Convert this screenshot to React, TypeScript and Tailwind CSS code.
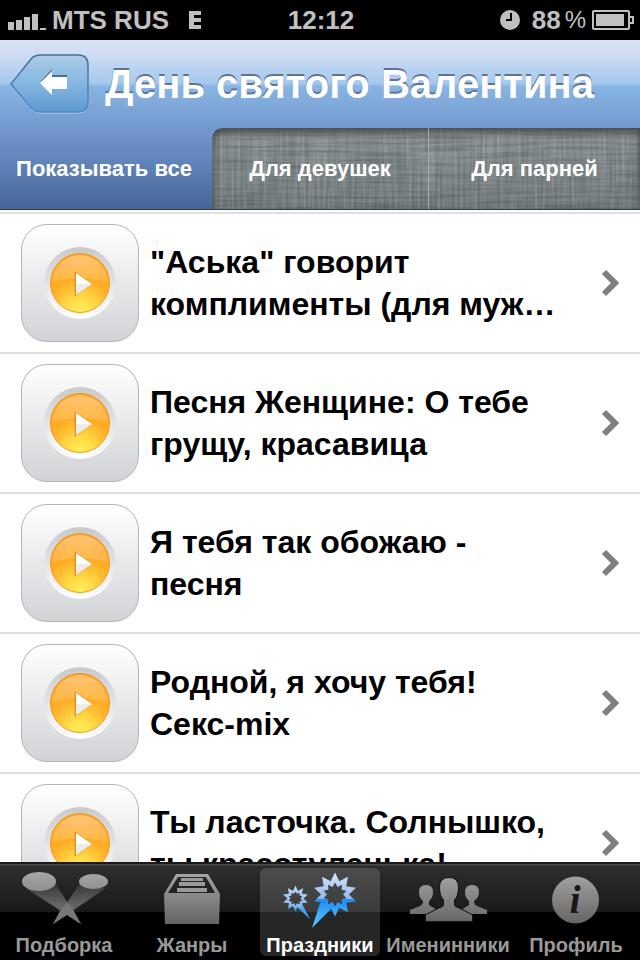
import type { ReactNode } from 'react';

const songs = [
  '"Аська" говорит\nкомплименты (для муж…',
  'Песня Женщине: О тебе\nгрущу, красавица',
  'Я тебя так обожаю -\nпесня',
  'Родной, я хочу тебя!\nСекс-mix',
  'Ты ласточка. Солнышко,\nты красотуленька!',
];

function StatusBar() {
  return (
    <div className="grid h-10 shrink-0 grid-cols-[1fr_auto_1fr] items-center bg-black pl-2 pr-1.5 text-[26px] leading-10 font-bold text-[#c0c0c0]">
      <div className="flex items-center">
        <svg width="38" height="18" viewBox="0 0 38 18" fill="#c0c0c0" className="mt-1">
          <path d="M0 9h6v8H0zM8 7h6v10H8zM16 4h6v13h-6zM24 1h6v16h-6zM32 15h6v2h-6z" />
        </svg>
        <span className="ml-1.5">MTS RUS</span>
        <svg width="13" height="18" viewBox="0 0 13 18" fill="#c0c0c0" className="ml-5">
          <path d="M0 0h12v4H5v3h7v4H5v3h7v4H0z" />
        </svg>
      </div>
      <span>12:12</span>
      <div className="flex items-center justify-end">
        <svg width="20" height="20" viewBox="0 0 20 20">
          <circle cx="10" cy="10" r="10" fill="#c0c0c0" />
          <path d="M11 3v7H6" stroke="#000" strokeWidth="2" fill="none" />
        </svg>
        <span className="ml-3">88</span>
        <span className="ml-1 text-[24px] font-normal">%</span>
        <svg width="42" height="20" viewBox="0 0 42 20" fill="none" stroke="#c0c0c0" strokeWidth="2" className="ml-1.5">
          <rect x="1" y="1" width="36" height="18" rx="1" />
          <path d="M38 7h3v6h-3" />
          <rect x="4" y="4" width="28" height="12" fill="#c0c0c0" stroke="none" />
        </svg>
      </div>
    </div>
  );
}

function BackButton() {
  return (
    <button type="button" aria-label="Назад" className="shrink-0">
      <svg width="80" height="60" viewBox="0 0 80 60">
        <defs>
          <linearGradient id="back" x1="0" y1="0" x2="0" y2="1">
            <stop offset="0" stopColor="#aacce6" />
            <stop offset=".5" stopColor="#86b6e0" />
            <stop offset="1" stopColor="#5b99d3" />
          </linearGradient>
          <linearGradient id="backEdge" x1="0" y1="0" x2="0" y2="1">
            <stop offset="0" stopColor="#486c94" />
            <stop offset="1" stopColor="#5589c6" />
          </linearGradient>
        </defs>
        <path d="M1 31 21 6q4-4 9-4h38q10 0 10 10v37q0 10-10 10H30q-5 0-9-4z" fill="none" stroke="#b9d4f0" />
        <path d="M1 30 21 5q4-4 9-4h38q10 0 10 10v37q0 10-10 10H30q-5 0-9-4z" fill="url(#back)" stroke="url(#backEdge)" strokeWidth="1.5" />
        <path d="M30 28 42 15v6h15v2H42z" fill="#47709a" />
        <path d="M30 29 42 17v6h15v12H42v6z" fill="#fff" />
      </svg>
    </button>
  );
}

// brushed cloth over the inactive filter tabs
function Linen() {
  return (
    <svg className="absolute inset-0 h-full w-full" aria-hidden="true">
      <defs>
        <filter id="warp" x="0" y="0" width="100%" height="100%">
          <feTurbulence type="fractalNoise" baseFrequency="0.35 0.015" numOctaves="2" seed="4" />
          <feColorMatrix values="0 0 0 0 1  0 0 0 0 1  0 0 0 0 1  0.4 0 0 0 -0.13" />
        </filter>
        <filter id="weft" x="0" y="0" width="100%" height="100%">
          <feTurbulence type="fractalNoise" baseFrequency="0.015 0.35" numOctaves="2" seed="9" />
          <feColorMatrix values="0 0 0 0 0  0 0 0 0 0  0 0 0 0 0  0.4 0 0 0 -0.16" />
        </filter>
      </defs>
      <rect width="100%" height="100%" filter="url(#warp)" />
      <rect width="100%" height="100%" filter="url(#weft)" />
    </svg>
  );
}

function PlayIcon() {
  return (
    <svg width="60" height="60" viewBox="0 0 60 60">
      <defs>
        <radialGradient id="orange" cx=".5" cy="1" r=".95">
          <stop offset="0" stopColor="#fff25c" />
          <stop offset=".25" stopColor="#ffdb48" />
          <stop offset=".6" stopColor="#ffae26" />
          <stop offset="1" stopColor="#ff9d18" />
        </radialGradient>
        <linearGradient id="gloss" x1="0" y1="0" x2="0" y2="1">
          <stop offset="0" stopColor="#fff" stopOpacity=".4" />
          <stop offset="1" stopColor="#fff" stopOpacity=".12" />
        </linearGradient>
      </defs>
      <circle cx="30" cy="30" r="29.5" fill="url(#orange)" stroke="#f29a18" />
      <path d="M2 30A28 28 0 0 1 58 30Q30 20 2 30z" fill="url(#gloss)" />
      <path d="M25 19v24l17-12z" fill="#c9780f" stroke="#c9780f" strokeOpacity=".5" fillOpacity=".5" />
      <path d="M26 20v22l16-11z" fill="#fff" />
      <path d="M26 31h16L26 42z" fill="#ececec" />
    </svg>
  );
}

function SongRow({ title }: { title: string }) {
  return (
    <li className="border-b-2 border-[#e0e0e0]">
      <a href="#" className="flex h-[138px] items-center pl-[21px] pr-5 text-black">
        <span className="flex size-[118px] shrink-0 items-center justify-center rounded-[26px] border border-[#b4b4b4] bg-gradient-to-b from-white to-[#d2d3d7]">
          <span className="flex size-[72px] items-center justify-center rounded-full bg-gradient-to-b from-[#c9c9cb] to-white">
            <PlayIcon />
          </span>
        </span>
        <span className="ml-[11px] min-w-0 flex-1 overflow-hidden text-[32px] leading-[42px] font-bold whitespace-pre">{title}</span>
        <svg width="20" height="28" viewBox="0 0 20 28" fill="none" stroke="#808080" strokeWidth="6" className="shrink-0">
          <path d="M4 3 15 14 4 25" />
        </svg>
      </a>
    </li>
  );
}

function TabItem({ label, active, children }: { label: string; active?: boolean; children: ReactNode }) {
  return (
    <button
      type="button"
      className={
        active
          ? 'flex h-[88px] w-[120px] flex-col items-center rounded-md bg-white/15 text-white'
          : 'flex h-[88px] w-[120px] flex-col items-center text-[#999]'
      }
    >
      <svg width="100" height="64" viewBox="0 0 100 64" className="shrink-0">
        {children}
      </svg>
      <span className="text-[20px] leading-[26px] font-bold whitespace-nowrap">{label}</span>
    </button>
  );
}

// ten-pointed star outline as path data
function star(cx: number, cy: number, outer: number, inner: number) {
  const points = Array.from({ length: 20 }, (_, i) => {
    const r = i % 2 ? inner : outer;
    const a = (Math.PI * i) / 10 - Math.PI / 2;
    return `${(cx + r * Math.cos(a)).toFixed(1)} ${(cy + r * Math.sin(a)).toFixed(1)}`;
  });
  return `M${points.join('L')}z`;
}

export default function App() {
  return (
    <div className="flex h-screen flex-col overflow-hidden bg-white font-['Liberation_Sans',Arial,sans-serif]">
      <StatusBar />
      <header className="flex h-[170px] shrink-0 flex-col justify-between border-b border-[#2d3a50] bg-[linear-gradient(to_bottom,#dbe2f5_0px,#cfdcf4_15px,#a5c8ee_43px,#a0c6ec_44px,#88b5e3_46px,#769fd1_80px,#6f94ca_96px,#46669a_169px)]">
        <div className="flex items-center pt-3.5 pl-2.5">
          <BackButton />
          <h1 className="ml-[15px] text-[40px] leading-[52px] font-bold whitespace-nowrap text-white [text-shadow:0_-2px_0_#5d7390]">День святого Валентина</h1>
        </div>
        <nav className="flex h-[81px] text-[22px] font-bold text-white [text-shadow:0_-2px_0_#35496b]">
          <button type="button" className="w-[212px] shrink-0 pr-1">Показывать все</button>
          <div className="relative grid flex-1 grid-cols-[217fr_211fr] overflow-hidden rounded-tl-[10px] bg-gradient-to-b from-[#838c8e] to-[#6c7577] [text-shadow:0_-2px_0_#474d4e]">
            <Linen />
            <div className="absolute inset-0 rounded-tl-[10px] shadow-[inset_0_4px_8px_#3e4344]" />
            <button type="button" className="relative border-r border-[#a5acad]">Для девушек</button>
            <button type="button" className="relative">Для парней</button>
          </div>
        </nav>
      </header>
      <main className="min-h-0 flex-1 overflow-y-auto pt-0.5 [scrollbar-width:none]">
        <ul className="border-t-2 border-[#e0e0e0]">
          {songs.map((s) => (
            <SongRow key={s} title={s} />
          ))}
        </ul>
      </main>
      <footer className="flex h-[98px] shrink-0 justify-around border-t-2 border-[#1a1a1a] bg-[linear-gradient(to_bottom,#4a4a4a_0px,#4a4a4a_1px,#2e2e2e_2px,#191919_48px,#000_48px)] pt-1">
        <svg width="0" height="0" className="absolute">
          <defs>
            <linearGradient id="gray" gradientUnits="userSpaceOnUse" x1="0" y1="5" x2="0" y2="56">
              <stop offset="0" stopColor="#a5a5a5" />
              <stop offset="1" stopColor="#646464" />
            </linearGradient>
            <linearGradient id="beam" gradientUnits="userSpaceOnUse" x1="0" y1="14" x2="0" y2="56">
              <stop offset="0" stopColor="#333" />
              <stop offset=".5" stopColor="#606060" />
              <stop offset="1" stopColor="#7c7c7c" />
            </linearGradient>
            <linearGradient id="blue" gradientUnits="userSpaceOnUse" x1="0" y1="5" x2="0" y2="58">
              <stop offset="0" stopColor="#d8e4f8" />
              <stop offset=".49" stopColor="#8fb8ec" />
              <stop offset=".5" stopColor="#1c8ef8" />
              <stop offset="1" stopColor="#5cc4ff" />
            </linearGradient>
            <linearGradient id="blueSmall" gradientUnits="userSpaceOnUse" x1="0" y1="18" x2="0" y2="51">
              <stop offset="0" stopColor="#c4d8f5" />
              <stop offset=".6" stopColor="#86b8ee" />
              <stop offset=".72" stopColor="#3ba4f8" />
              <stop offset="1" stopColor="#4cb8ff" />
            </linearGradient>
          </defs>
        </svg>
        <TabItem label="Подборка">
          <path d="M13 21 67 56 41 15z" fill="url(#beam)" />
          <path d="M92 20 39 56 66 15z" fill="url(#beam)" />
          <path d="M53 34 60 43 67 56 53 47 39 56 46 43z" fill="#777" />
          <ellipse cx="25" cy="13.5" rx="17" ry="9.5" fill="url(#gray)" />
          <ellipse cx="79.5" cy="13.5" rx="14.5" ry="7.5" fill="url(#gray)" />
        </TabItem>
        <TabItem label="Жанры">
          <path fillRule="evenodd" d="M34 6h32l12 20-1 30H23L22 26zM36 9 26 25h47L64 9z" fill="url(#gray)" />
          <path d="M39 10h22v3H39zM37 14h26v4H37zM35 20h30v4H35z" fill="#999" />
        </TabItem>
        <TabItem label="Праздники" active>
          <path fillRule="evenodd" d={star(25.5, 30.5, 13, 8) + star(25.5, 30.5, 7, 5)} fill="url(#blueSmall)" />
          <path d="M26 38 32 36 40 51z" fill="url(#blueSmall)" />
          <path fillRule="evenodd" d={star(65, 26.5, 22, 14) + star(65, 26.5, 12, 8)} fill="url(#blue)" />
          <path d="M50 35 56 34 61 41 42 60z" fill="url(#blue)" />
        </TabItem>
        <TabItem label="Именинники">
          <path d="M21 24q0-7 7-7t7 7q0 6-4 9v4l8 5v4H12v-4l10-4q3-1 3-5-4-3-4-9z" fill="url(#gray)" />
          <path d="M81 24q0-7-7-7t-7 7q0 6 4 9v4l-8 5v4h26v-4l-10-4q-3-1-3-5 5-3 5-9z" fill="url(#gray)" />
          <path
            d="M42 19q0-9 9-9t9 9q0 9-4 13v4q0 3 4 4l14 7v6H28v-6l14-7q4-1 4-4v-4q-4-4-4-13z"
            fill="url(#gray)"
            stroke="#151515"
            strokeWidth="2"
            paintOrder="stroke"
          />
        </TabItem>
        <TabItem label="Профиль">
          <circle cx="49.5" cy="32" r="23.5" fill="url(#gray)" />
          <text x="49" y="45" textAnchor="middle" fill="#181818" className="font-['Liberation_Serif',serif] text-[40px] font-bold italic">i</text>
        </TabItem>
      </footer>
    </div>
  );
}
